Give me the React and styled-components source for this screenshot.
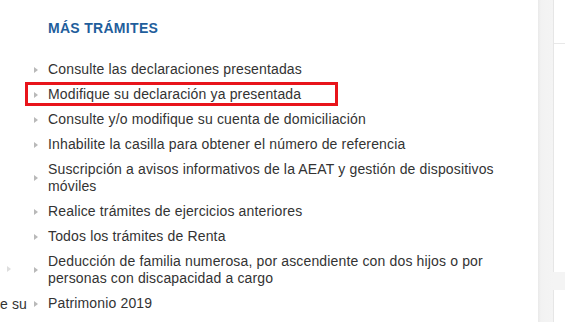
import React from 'react'
import styled, { createGlobalStyle } from 'styled-components'

const GlobalStyle = createGlobalStyle`
  html, body {
    margin: 0;
    padding: 0;
    background: #ffffff;
  }
  body {
    font-family: "Liberation Sans", Arial, sans-serif;
    overflow: hidden;
  }
`

const tramites = [
    { id: 1, text: 'Consulte las declaraciones presentadas' },
    { id: 2, text: 'Modifique su declaración ya presentada', marked: true },
    { id: 3, text: 'Consulte y/o modifique su cuenta de domiciliación' },
    { id: 4, text: 'Inhabilite la casilla para obtener el número de referencia' },
    { id: 5, text: 'Suscripción a avisos informativos de la AEAT y gestión de dispositivos móviles' },
    { id: 6, text: 'Realice trámites de ejercicios anteriores' },
    { id: 7, text: 'Todos los trámites de Renta' },
    { id: 8, text: 'Deducción de familia numerosa, por ascendiente con dos hijos o por personas con discapacidad a cargo' },
    { id: 9, text: 'Patrimonio 2019' },
]

const App = () => {
    return (
        <>
            <GlobalStyle />
            <Page>
                <LeftStrip>
                    <StripArrow>
                        <Arrow $faint />
                    </StripArrow>
                    <StripText>
                        <span>modifique su</span>
                    </StripText>
                </LeftStrip>

                <Main>
                    <Heading>MÁS TRÁMITES</Heading>
                    <List>
                        {tramites.map((item) => (
                            <Item key={item.id} $marked={item.marked}>
                                <Arrow />
                                <Label>{item.text}</Label>
                            </Item>
                        ))}
                    </List>
                </Main>

                <Gutter />

                <Side>
                    <Card $height={272}>
                        <CardHead />
                    </Card>
                    <Card $height={40} />
                </Side>
            </Page>
        </>
    )
}

const Page = styled.div`
  display: flex;
  width: 565px;
  height: 322px;
  overflow: hidden;
  color: #333333;
  font-size: 14px;
  letter-spacing: 0.15px;
`

const LeftStrip = styled.div`
  width: 28px;
  flex-shrink: 0;
  overflow: hidden;
  display: flex;
  flex-direction: column;
`

const StripArrow = styled.div`
  display: flex;
  align-items: center;
  height: 17px;
  margin-top: 260px;
  padding-left: 7px;
`

const StripText = styled.div`
  display: flex;
  justify-content: flex-end;
  margin-top: 19px;
  line-height: 17px;
  white-space: nowrap;
  color: #333333;

  & > span {
    flex-shrink: 0;
    margin-right: 1px;
  }
`

const Main = styled.div`
  width: 510px;
  flex-shrink: 0;
  padding: 20px 14px 0 6px;
  box-sizing: border-box;
  background: #ffffff;
`

const Heading = styled.h3`
  margin: 0 0 24px 14px;
  font-size: 14px;
  line-height: 17px;
  font-weight: bold;
  letter-spacing: 0.3px;
  color: #1f5e9c;
`

const List = styled.ul`
  margin: 0;
  padding: 0;
  list-style: none;
  display: flex;
  flex-direction: column;
  gap: 8px;
`

const Item = styled.li`
  position: relative;
  display: flex;
  align-items: center;
  gap: 10px;
  line-height: 17px;

  ${(p) =>
        p.$marked &&
        `
    &::after {
      content: '';
      position: absolute;
      left: -9px;
      top: -4px;
      width: 307px;
      height: 18px;
      border: 3px solid #e8141b;
      pointer-events: none;
    }
  `}
`

const Arrow = styled.span`
  flex-shrink: 0;
  width: 0;
  height: 0;
  border-top: 3.5px solid transparent;
  border-bottom: 3.5px solid transparent;
  border-left: 4px solid ${(p) => (p.$faint ? '#dddddd' : '#b9b9b9')};
`

const Label = styled.span`
  color: #333333;
`

const Gutter = styled.div`
  width: 15px;
  flex-shrink: 0;
  background: linear-gradient(to right, #e9e9e9 0px, #f2f2f2 3px, #f4f4f4 100%);
`

const Side = styled.div`
  flex: 1;
  display: flex;
  flex-direction: column;
  gap: 18px;
  background: #f4f4f4;
`

const Card = styled.div`
  height: ${(p) => p.$height}px;
  flex-shrink: 0;
  background: #ffffff;
  border-left: 1px solid #e6e6e6;
  box-sizing: border-box;
`

const CardHead = styled.div`
  height: 43px;
  border-bottom: 1px solid #e8e8e8;
`

export default App
